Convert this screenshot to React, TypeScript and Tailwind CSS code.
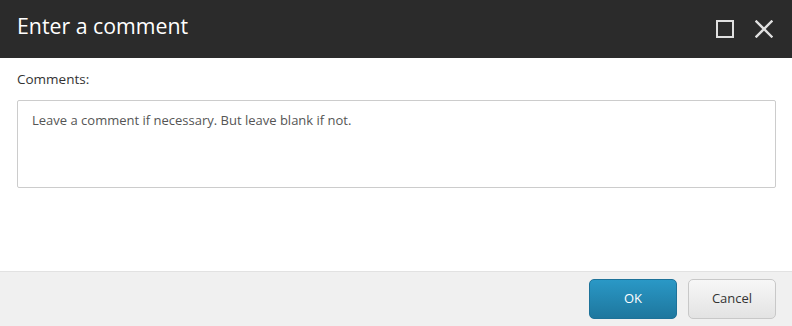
import React from "react";

export default function App() {
  return (
    <div className="w-[792px] h-[326px] flex flex-col bg-white overflow-hidden" style={{ fontFamily: '"Open Sans", "Noto Sans", sans-serif' }}>
      <div className="h-[58px] bg-[#2b2b2b] flex items-center pl-[17px] pr-[19px]">
        <div className="text-white text-[21.3px] leading-none flex-1 -mt-[7px]">Enter a comment</div>
        <div className="flex items-center gap-[21px]">
          <svg width="18" height="18" viewBox="0 0 18 18">
            <rect x="1" y="1" width="16" height="16" fill="none" stroke="#e0e0e0" strokeWidth="2" />
          </svg>
          <svg width="18" height="18" viewBox="0 0 18 18">
            <path d="M1.5 1.5 L16.5 16.5 M16.5 1.5 L1.5 16.5" stroke="#e0e0e0" strokeWidth="2.4" strokeLinecap="square" />
          </svg>
        </div>
      </div>
      <div className="flex-1 pl-[17px] pr-[16px] pt-[12px]">
        <div className="text-[13.5px] text-[#333] leading-[19px]">Comments:</div>
        <div className="mt-[11px] h-[88px] border border-[#ccc] rounded-[2px] px-[14px] pt-[10px] text-[13px] text-[#555] leading-[18px]">
          Leave a comment if necessary. But leave blank if not.
        </div>
      </div>
      <div className="h-[55px] bg-[#f0f0f0] border-t border-[#e2e2e2] flex items-center justify-end gap-[11px] pr-[16px]">
        <button className="w-[88px] h-[40px] rounded-[5px] bg-gradient-to-b from-[#2a98c6] to-[#1e779e] border border-[#1d7299] text-white text-[13px]">OK</button>
        <button className="w-[88px] h-[40px] rounded-[5px] bg-gradient-to-b from-[#f7f7f7] to-[#e3e3e3] border border-[#c8c8c8] text-[#333] text-[13px]">Cancel</button>
      </div>
    </div>
  );
}
